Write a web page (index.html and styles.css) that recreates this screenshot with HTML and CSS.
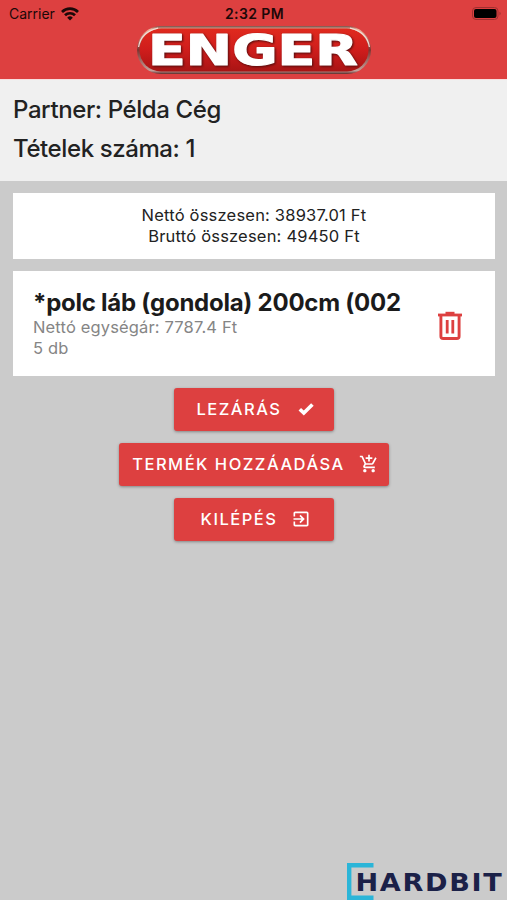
FILE: index.html
```html
<!DOCTYPE html>
<html lang="hu">
<head>
  <meta charset="UTF-8" />
  <meta name="viewport" content="width=device-width, initial-scale=1.0"/>
  <title>Enger</title>
  <link rel="stylesheet" href="styles.css">
</head>
<body>
  <header class="header">
    <div class="status-bar">
      <div class="carrier">
        <span>Carrier</span>
        <svg width="18" height="14" viewBox="0 0 18 14" fill="none" stroke="#1c0808" stroke-width="2.7">
          <path d="M1 5a11.4 11.4 0 0 1 16 0"/>
          <path d="M4 8.3a7.1 7.1 0 0 1 10 0"/>
          <path d="M9 13.5L6.2 10.7a4 4 0 0 1 5.6 0z" fill="#1c0808" stroke="none"/>
        </svg>
      </div>
      <div class="clock">2:32 PM</div>
      <svg class="battery" width="30" height="14" viewBox="0 0 30 14">
        <rect x=".5" y=".5" width="25.5" height="12" rx="3.5" fill="none" stroke="#a03030"/>
        <rect x="2" y="2" width="22.5" height="9" rx="2" fill="#000"/>
        <path d="M27.5 4.8q2.4 1.7 0 3.6z" fill="#a03030"/>
      </svg>
    </div>
    <svg class="logo" width="236" height="50" viewBox="0 0 236 50">
      <defs>
        <linearGradient id="rim" x1="0" y1="0" x2="0" y2="1">
          <stop offset="0" stop-color="#76504a"/>
          <stop offset=".07" stop-color="#f0b49c"/>
          <stop offset=".5" stop-color="#7d3430"/>
          <stop offset=".93" stop-color="#c5a09a"/>
          <stop offset="1" stop-color="#5c2a28"/>
        </linearGradient>
        <linearGradient id="plate" x1="0" y1="0" x2="0" y2="1">
          <stop offset="0" stop-color="#e02a1e"/>
          <stop offset=".5" stop-color="#cf1d1c"/>
          <stop offset="1" stop-color="#a81414"/>
        </linearGradient>
      </defs>
      <rect x="1" y="1" width="234" height="48" rx="24" fill="url(#rim)"/>
      <rect x="3.5" y="3.5" width="229" height="43" rx="21.5" fill="url(#plate)"/>
      <path d="M22 3.2Q5 7 2.6 22M214 3.2Q231 7 233.4 22" fill="none" stroke="#f3dcd6" stroke-width="1.2"/>
      <text class="logo-text" x="12" y="40" textLength="210" lengthAdjust="spacingAndGlyphs">ENGER</text>
    </svg>
  </header>

  <section class="info">
    <div class="partner">Partner: Példa Cég</div>
    <div class="count">Tételek száma: 1</div>
  </section>

  <main class="content">
    <div class="card totals">
      <div class="net">Nettó összesen: 38937.01 Ft</div>
      <div class="gross">Bruttó összesen: 49450 Ft</div>
    </div>

    <div class="card item">
      <div class="item-text">
        <h2>*polc láb (gondola) 200cm (002</h2>
        <p class="price">Nettó egységár: 7787.4 Ft</p>
        <p>5 db</p>
      </div>
      <svg class="trash" width="26" height="30" viewBox="0 0 26 30" fill="none" stroke="#dd4040">
        <path d="M1 4h24" stroke-width="2.8"/>
        <path d="M8.5 2h9" stroke-width="2.4"/>
        <path d="M3.9 4v21.2q0 2.3 2.3 2.3h13.6q2.3 0 2.3-2.3V4" stroke-width="2.9"/>
        <path d="M10.2 9v13.5M15.8 9v13.5" stroke-width="2.8"/>
      </svg>
    </div>

    <div class="actions">
      <button class="btn close">
        <span>LEZÁRÁS</span>
        <svg width="16" height="14" viewBox="0 0 16 14" fill="none" stroke="#fff" stroke-width="3.6">
          <path d="M1.8 7.2L5.8 11L14.4 2.4"/>
        </svg>
      </button>
      <button class="btn add">
        <span>TERMÉK HOZZÁADÁSA</span>
        <svg width="20" height="20" viewBox="0 0 24 24" fill="#fff">
          <path d="M11 9h2V6h3V4h-3V1h-2v3H8v2h3v3zm-4 9c-1.1 0-1.99.9-1.99 2S5.9 22 7 22s2-.9 2-2-.9-2-2-2zm10 0c-1.1 0-1.99.9-1.99 2s.89 2 1.99 2 2-.9 2-2-.9-2-2-2zm-9.83-3.25l.03-.12.9-1.63h7.45c.75 0 1.41-.41 1.75-1.03l3.86-7.01L19.42 4h-.01l-1.1 2-2.76 5H8.53l-.13-.27L6.16 6l-.95-2-.94-2H1v2h2l3.6 7.59-1.35 2.45c-.16.28-.25.61-.25.96 0 1.1.9 2 2 2h12v-2H7.42c-.13 0-.25-.11-.25-.25z"/>
        </svg>
      </button>
      <button class="btn exit">
        <span>KILÉPÉS</span>
        <svg width="20" height="20" viewBox="0 0 24 24" fill="#fff">
          <path d="M10.09 15.59L11.5 17l5-5-5-5-1.41 1.41L12.67 11H3v2h9.67l-2.58 2.59zM19 3H5c-1.11 0-2 .9-2 2v4h2V5h14v14H5v-4H3v4c0 1.1.89 2 2 2h14c1.1 0 2-.9 2-2V5c0-1.1-.9-2-2-2z"/>
        </svg>
      </button>
    </div>
  </main>

  <footer class="footer">
    <svg width="160" height="37" viewBox="0 0 160 37">
      <path d="M26.5 2.2H2.2v32.6h24.3" fill="none" stroke="#2bb5d8" stroke-width="4.4"/>
      <text class="hardbit" x="8.5" y="28" textLength="148" lengthAdjust="spacingAndGlyphs">HARDBIT</text>
    </svg>
  </footer>
</body>
</html>
```
FILE: styles.css
```css
:root {
  --red: #dd4040;
  --bg: #cbcbcb;
  --text: #222;
}

* {
  box-sizing: border-box;
}

body {
  margin: 0;
  height: 100vh;
  display: flex;
  flex-direction: column;
  overflow: hidden;
  font-family: Inter, "Liberation Sans", sans-serif;
  background: var(--bg);
  color: var(--text);
  white-space: nowrap;
}

.header {
  height: 80px;
  background: var(--red);
  border-bottom: 1px solid #f8dede;
  display: flex;
  flex-direction: column;
  align-items: center;
}

.status-bar {
  width: 100%;
  height: 26px;
  padding: 1px 7px 0 9px;
  display: grid;
  grid-template-columns: 1fr auto 1fr;
  align-items: center;
  font-size: 14px;
  color: #1c0808;
}

.carrier {
  display: flex;
  align-items: center;
  gap: 6px;
}

.clock {
  font-weight: 600;
  letter-spacing: 0.4px;
}

.battery {
  justify-self: end;
  margin-right: -2px;
}

.logo {
  margin-top: -1px;
  overflow: visible;
}

.logo-text {
  font-family: "DejaVu Sans", sans-serif;
  font-weight: bold;
  font-size: 42px;
  fill: #fff;
  stroke: #fff;
  stroke-width: 1.2px;
  stroke-linejoin: round;
  filter: drop-shadow(1px 1.5px 1px #500c0c);
}

.info {
  height: 101px;
  padding: 10px 13px;
  background: #f0f0f0;
  font-size: 24px;
  font-weight: 500;
  line-height: 39px;
  letter-spacing: -0.4px;
}

.content {
  flex: 1;
  padding: 12px 12px 0 13px;
}

.card {
  background: #fff;
  margin-bottom: 12px;
}

.totals {
  height: 66px;
  padding-top: 12px;
  text-align: center;
  font-size: 16.5px;
  line-height: 21px;
  letter-spacing: 0.2px;
}

.item {
  height: 105px;
  padding: 18px 32px 0 20px;
  display: flex;
  justify-content: space-between;
}

.item h2 {
  margin: 0;
  font-size: 24px;
  font-weight: 700;
  line-height: 28px;
  letter-spacing: -0.25px;
  color: #1b1b1b;
}

.item p {
  margin: 0;
  font-size: 16.5px;
  line-height: 21px;
  letter-spacing: 0.15px;
  color: #858585;
}

.trash {
  margin-top: 22px;
}

.actions {
  display: flex;
  flex-direction: column;
  align-items: center;
  gap: 12px;
}

.btn {
  width: 160px;
  height: 43px;
  padding: 0 0 1px 8px;
  display: flex;
  justify-content: center;
  align-items: center;
  gap: 16px;
  border: none;
  border-radius: 3px;
  background: var(--red);
  color: #fff;
  font-family: inherit;
  font-size: 16.5px;
  font-weight: 500;
  letter-spacing: 1.5px;
  box-shadow: 0 1px 3px rgba(0, 0, 0, 0.35);
}

.close {
  padding-left: 2px;
}

.add {
  width: 270px;
  gap: 14px;
  padding-left: 3px;
}

.exit {
  gap: 14px;
  padding-left: 4px;
}

.footer {
  display: flex;
  justify-content: flex-end;
}

.hardbit {
  font-family: "DejaVu Sans", sans-serif;
  font-weight: bold;
  font-size: 24px;
  letter-spacing: 1.5px;
  fill: #1b2148;
}
```
